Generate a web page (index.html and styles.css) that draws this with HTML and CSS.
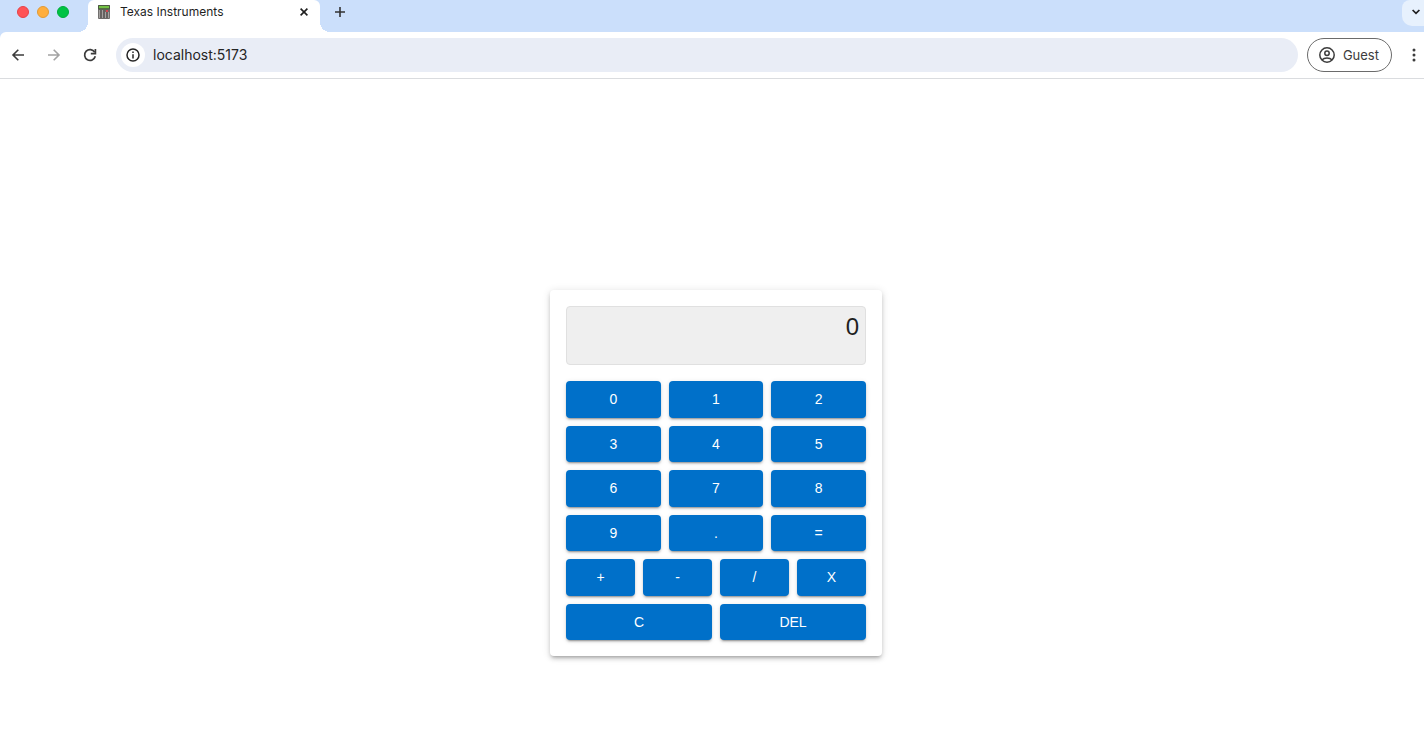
FILE: index.html
```html
<!DOCTYPE html>
<html lang="en">
<head>
<meta charset="utf-8">
<title>Texas Instruments</title>
<link rel="stylesheet" href="styles.css">
</head>
<body>
<header class="browser">
  <div class="tabstrip">
    <div class="lights">
      <button class="light close" aria-label="Close window"></button>
      <button class="light minimize" aria-label="Minimize window"></button>
      <button class="light expand" aria-label="Expand window"></button>
    </div>
    <div class="tab">
      <svg class="favicon" width="12" height="14" viewBox="0 0 12 14" aria-hidden="true">
        <rect width="12" height="14" rx="1" fill="#6d6a69"/>
        <rect width="12" height="4.500" rx="1" fill="#4c5a40"/>
        <rect x="1" y="1" width="10" height="2.200" fill="#72c043"/>
        <path d="M1.500 5v8M4.500 5v8M7.500 7v6M10.500 7v6" stroke="#a5a2a1" stroke-width="1.200"/>
        <path d="M3 5v8M6 5v8M9 7v6" stroke="#5b5655"/>
        <rect x="8" y="5" width="2" height="2" fill="#d9434e"/>
      </svg>
      <span class="tab-title">Texas Instruments</span>
      <button class="icon-button tab-close" aria-label="Close tab">
        <svg width="8" height="8" viewBox="0 0 8 8"><path d="M.6.6l6.800 6.800M7.400.6L.6 7.400" stroke="#1f1f1f" stroke-width="1.600"/></svg>
      </button>
    </div>
    <button class="icon-button new-tab" aria-label="New tab">
      <svg width="12" height="12" viewBox="0 0 12 12"><path d="M6 1v10M1 6h10" stroke="#333" stroke-width="1.600"/></svg>
    </button>
    <button class="tab-search" aria-label="Search tabs">
      <svg width="8" height="6" viewBox="0 0 8 6"><path d="M.6 1L4 4.400 7.400 1" fill="none" stroke="#1f1f1f" stroke-width="1.700"/></svg>
    </button>
  </div>
  <div class="toolbar">
    <nav class="nav">
      <button class="icon-button" aria-label="Back">
        <svg width="16" height="16" viewBox="0 0 16 16"><path d="M14 8H3.200M8.300 2.700L3 8l5.300 5.300" fill="none" stroke="#3c3c3c" stroke-width="1.600"/></svg>
      </button>
      <button class="icon-button" aria-label="Forward">
        <svg width="16" height="16" viewBox="0 0 16 16"><path d="M2 8h10.800M7.700 2.700L13 8l-5.300 5.300" fill="none" stroke="#a3a3a3" stroke-width="1.600"/></svg>
      </button>
      <button class="icon-button" aria-label="Reload">
        <svg width="16" height="16" viewBox="0 0 16 16"><path d="M13.300 9.300A5.400 5.400 0 1 1 12.700 5.200" fill="none" stroke="#3c3c3c" stroke-width="1.700"/><path d="M13.400 2v4.600H8.800" fill="none" stroke="#3c3c3c" stroke-width="1.700"/></svg>
      </button>
    </nav>
    <div class="address">
      <button class="site-info" aria-label="Site information">
        <svg width="14" height="14" viewBox="0 0 14 14"><circle cx="7" cy="7" r="6" fill="none" stroke="#242424" stroke-width="1.500"/><path d="M7 6.200v4.200M7 3.600v1.500" stroke="#242424" stroke-width="1.500"/></svg>
      </button>
      <input class="url" type="text" aria-label="Address" value="localhost:5173">
    </div>
    <button class="guest">
      <svg width="16" height="16" viewBox="0 0 16 16" fill="none" stroke="#3c3c3c" stroke-width="1.500" aria-hidden="true"><circle cx="8" cy="8" r="7.200"/><circle cx="8" cy="6.200" r="2.200"/><path d="M2.800 13c1.500-1.500 3.200-2 5.200-2s3.700.5 5.200 2"/></svg>
      <span>Guest</span>
    </button>
    <button class="icon-button menu" aria-label="Menu">
      <svg width="4" height="14" viewBox="0 0 4 14" fill="#3c3c3c"><circle cx="2" cy="2" r="1.500"/><circle cx="2" cy="7" r="1.500"/><circle cx="2" cy="12" r="1.500"/></svg>
    </button>
  </div>
</header>
<main class="page">
  <section class="calculator" aria-label="Calculator">
    <output class="display">0</output>
    <div class="keys">
      <button class="key">0</button>
      <button class="key">1</button>
      <button class="key">2</button>
      <button class="key">3</button>
      <button class="key">4</button>
      <button class="key">5</button>
      <button class="key">6</button>
      <button class="key">7</button>
      <button class="key">8</button>
      <button class="key">9</button>
      <button class="key">.</button>
      <button class="key">=</button>
    </div>
    <div class="keys operators">
      <button class="key">+</button>
      <button class="key">-</button>
      <button class="key">/</button>
      <button class="key">X</button>
    </div>
    <div class="keys actions">
      <button class="key">C</button>
      <button class="key">DEL</button>
    </div>
  </section>
</main>
</body>
</html>
```
FILE: styles.css
```css
* {
  box-sizing: border-box;
}

body {
  margin: 0;
  background: #fff;
  color: #1f1f1f;
  font-family: Inter, "Liberation Sans", sans-serif;
}

button {
  margin: 0;
  padding: 0;
  border: 0;
  background: none;
  font: inherit;
  color: inherit;
}

svg {
  display: block;
  flex: none;
}

.browser {
  background: #cbdffb;
}

/* Tab strip */
.tabstrip {
  display: flex;
  height: 32px;
}

.lights {
  display: flex;
  align-items: center;
  gap: 8px;
  width: 88px;
  height: 24px;
  padding-left: 17px;
}

.light {
  width: 12px;
  height: 12px;
  border: 1px solid;
  border-radius: 50%;
}

.close {
  background: #ff5356;
  border-color: #e64247;
}

.minimize {
  background: #ffae3d;
  border-color: #e29a35;
}

.expand {
  background: #00c344;
  border-color: #00ac3a;
}

.tab {
  position: relative;
  display: flex;
  align-items: center;
  width: 232px;
  padding: 0 12px 8px 10px;
  border-radius: 6px 6px 0 0;
  background: #fff;
}

.tab::before,
.tab::after {
  content: "";
  position: absolute;
  bottom: 0;
  width: 10px;
  height: 10px;
}

.tab::before {
  right: 100%;
  background: radial-gradient(circle at 0 0, transparent 10px, #fff 10px);
}

.tab::after {
  left: 100%;
  background: radial-gradient(circle at 100% 0, transparent 10px, #fff 10px);
}

.tab-title {
  flex: 1;
  margin-left: 10px;
  font-size: 12px;
  line-height: 16px;
}

.icon-button {
  display: flex;
  align-items: center;
  justify-content: center;
}

.new-tab {
  width: 40px;
  height: 24px;
}

.tab-search {
  display: flex;
  align-items: center;
  width: 22px;
  height: 26px;
  margin-left: auto;
  padding-left: 10px;
  padding-bottom: 2px;
  border-radius: 8px 0 0 10px;
  background: #e7f1fd;
}

/* Toolbar */
.toolbar {
  display: flex;
  align-items: center;
  height: 47px;
  padding: 0 8px 0 10px;
  border-bottom: 1px solid #dadcdf;
  border-top-left-radius: 6px;
  background: #fff;
}

.nav {
  display: flex;
  gap: 20px;
  margin-right: 18px;
}

.address {
  display: flex;
  flex: 1;
  align-items: center;
  height: 34px;
  padding-left: 5px;
  border-radius: 17px;
  background: #e9edf6;
}

.site-info {
  display: flex;
  align-items: center;
  justify-content: center;
  width: 24px;
  height: 24px;
  border-radius: 50%;
  background: #fff;
}

.url {
  flex: 1;
  margin-left: 8px;
  padding: 0;
  border: 0;
  outline: 0;
  background: none;
  color: #242424;
  font-family: inherit;
  font-size: 14px;
  line-height: 20px;
}

.guest {
  display: flex;
  align-items: center;
  gap: 8px;
  height: 34px;
  margin: 0 20px 0 9px;
  padding: 0 12px 0 11px;
  border: 1px solid #6b6b6b;
  border-radius: 17px;
  color: #3c3c3c;
  font-size: 13px;
}

/* Calculator */
.page {
  display: flex;
  justify-content: center;
  padding: 211px 0 24px 8px;
  font-family: "Liberation Sans", Arial, sans-serif;
}

.calculator {
  display: grid;
  gap: 8px;
  width: 332px;
  padding: 16px;
  border-radius: 4px;
  background: #fff;
  box-shadow: 0 3px 3px -2px rgba(0, 0, 0, .2), 0 3px 4px rgba(0, 0, 0, .14), 0 1px 8px rgba(0, 0, 0, .12);
}

.display {
  display: block;
  height: 59px;
  margin-bottom: 8px;
  padding: 6px;
  border: 1px solid #e0e0e0;
  border-radius: 4px;
  background: #efefef;
  font-size: 24px;
  line-height: 28px;
  text-align: right;
}

.keys {
  display: grid;
  grid-template-columns: repeat(3, 1fr);
  gap: 8px;
}

.operators {
  grid-template-columns: repeat(4, 1fr);
}

.actions {
  grid-template-columns: repeat(2, 1fr);
}

.key {
  padding: 6px;
  border-radius: 4px;
  background: #0070c9;
  color: #fff;
  font-size: 14px;
  line-height: 1.75;
  box-shadow: 0 3px 1px -2px rgba(0, 0, 0, .2), 0 2px 2px rgba(0, 0, 0, .14), 0 1px 5px rgba(0, 0, 0, .12);
}
```
